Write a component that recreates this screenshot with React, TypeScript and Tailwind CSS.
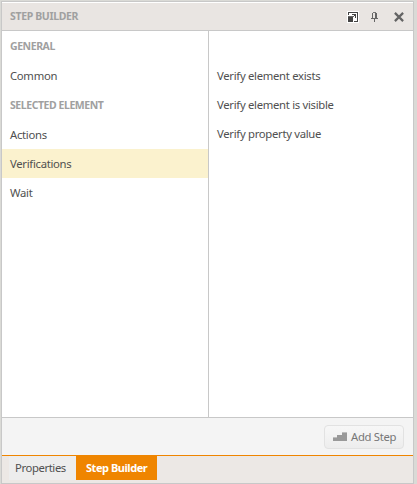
import React from "react";

const general = ["Common"];
const selected = ["Actions", "Verifications", "Wait"];
const steps = ["Verify element exists", "Verify element is visible", "Verify property value"];

function DockIcon() {
  return (
    <svg width="12" height="12" viewBox="0 0 12 12" shapeRendering="crispEdges">
      <path fill="#fff" d="M0 0h12v12H0z" />
      <path fill="#444" d="M1 1h10v10H7v-1h3V2H2v2H1zM1 6h5v5H1zM5 3h4v4H8V5H7V4H5z" />
      <path fill="#666" d="M6 5h1v1H6zM1 5h5v1H1z" />
    </svg>
  );
}

function PinIcon() {
  return (
    <svg width="7" height="10" viewBox="0 0 7 10" shapeRendering="crispEdges">
      <path fill="#666" d="M1 1h1v5H1zM4 1h2v5H4zM0 6h7v1H0zM3 7h1v3H3z" />
      <path fill="#777" d="M2 0h3v1H2z" />
    </svg>
  );
}

function CloseIcon() {
  return (
    <svg width="10" height="10" viewBox="0 0 10 10">
      <path stroke="#646464" strokeWidth="2.2" d="M.9.9l8.2 8.2M9.1.9L.9 9.1" />
    </svg>
  );
}

function StairsIcon() {
  return (
    <svg width="14" height="9" viewBox="0 0 14 9" shapeRendering="crispEdges">
      <path fill="#999" d="M0 6h4V3h5V1h5v8H0z" />
      <path fill="#bdbdbd" d="M0 5h4v1H0zM9 0h5v1H9z" />
    </svg>
  );
}

function Heading({ children }: { children: React.ReactNode }) {
  return <div className="flex h-[30px] items-center pl-2 pt-0.5 text-[10.5px] font-bold tracking-[-0.44px] text-[#a0a0a0]">{children}</div>;
}

function Item({ label, active = false }: { label: string; active?: boolean }) {
  return (
    <div className={`flex h-[29px] items-center pl-2 pt-0.5 tracking-[-0.3px] ${active ? "bg-[#fbf2ce]" : ""}`}>{label}</div>
  );
}

export default function App() {
  return (
    <div className="h-[484px] w-[417px] overflow-hidden whitespace-nowrap bg-[#dadad6] pl-px pr-[3px] pt-px font-['Noto_Sans',sans-serif] text-[11.3px] text-[#505050]">
      <div className="flex h-[483px] flex-col border border-[#c8c8c8] bg-white">
        <header className="mt-px flex h-7 shrink-0 items-center border-b border-[#c8c8c8] bg-[#e9e5e2] pl-2 pr-[9px]">
          <h1 className="pt-px text-[10.5px] font-bold tracking-[-0.35px] text-[#a0a0a0]">STEP BUILDER</h1>
          <div className="ml-auto flex items-center">
            <DockIcon />
            <span className="ml-3"><PinIcon /></span>
            <span className="ml-4"><CloseIcon /></span>
          </div>
        </header>
        <main className="flex h-[386px] shrink-0">
          <nav className="w-[206px] shrink-0">
            <Heading>GENERAL</Heading>
            {general.map((label) => <Item key={label} label={label} />)}
            <Heading>SELECTED ELEMENT</Heading>
            {selected.map((label) => <Item key={label} label={label} active={label === "Verifications"} />)}
          </nav>
          <section className="flex-1 border-l border-[#c8c8c8] pt-[30px]">
            {steps.map((label) => <Item key={label} label={label} />)}
          </section>
        </main>
        <div className="flex h-[38px] shrink-0 items-center justify-end border-t border-[#c8c8c8] bg-[#f4f4f4] pr-[9px]">
          <button className="flex h-6 w-20 items-center rounded-sm border border-[#e2e2e2] bg-gradient-to-b from-[#f7f7f7] to-[#ededed] pl-2 text-[#777]">
            <StairsIcon />
            <span className="ml-1 pt-px tracking-[-0.3px]">Add Step</span>
          </button>
        </div>
        <footer className="flex flex-1 items-start border-t border-[#ef8500] bg-[#ece8e5] pl-[7px]">
          <div className="flex h-6 w-[67px] items-center bg-[#ededed] pl-1.5 pt-px tracking-[-0.4px]">Properties</div>
          <div className="flex h-6 w-[81px] items-center bg-[#ef8500] pl-2.5 pt-px text-[11px] font-bold tracking-[-0.45px] text-white">Step Builder</div>
        </footer>
      </div>
    </div>
  );
}
